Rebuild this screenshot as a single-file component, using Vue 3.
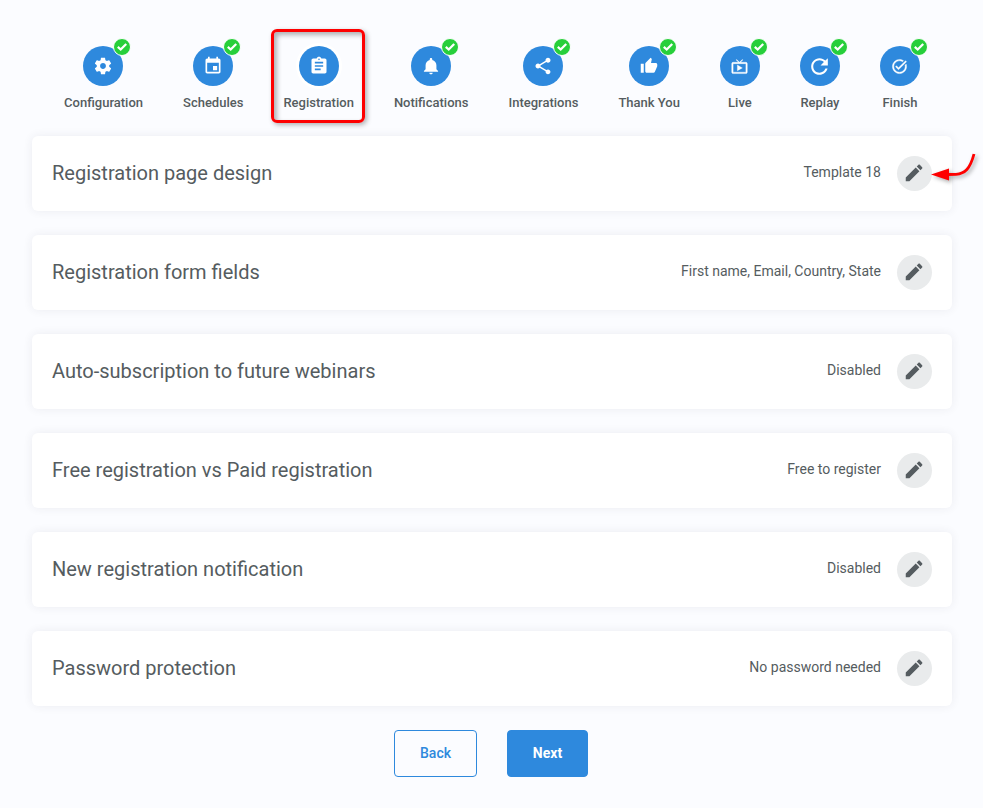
<script setup>
import { ref } from 'vue'

const steps = ref([
  { name: 'Configuration', done: true, size: 20, icon: 'M19.43 12.98c.04-.32.07-.64.07-.98s-.03-.66-.07-.98l2.11-1.65c.19-.15.24-.42.12-.64l-2-3.46c-.12-.22-.39-.3-.61-.22l-2.49 1c-.52-.4-1.08-.73-1.69-.98l-.38-2.65C14.46 2.18 14.25 2 14 2h-4c-.25 0-.46.18-.49.42l-.38 2.65c-.61.25-1.17.59-1.69.98l-2.49-1c-.23-.09-.49 0-.61.22l-2 3.46c-.13.22-.07.49.12.64l2.11 1.65c-.04.32-.07.65-.07.98s.03.66.07.98l-2.11 1.65c-.19.15-.24.42-.12.64l2 3.46c.12.22.39.3.61.22l2.49-1c.52.4 1.08.73 1.69.98l.38 2.65c.03.24.24.42.49.42h4c.25 0 .46-.18.49-.42l.38-2.65c.61-.25 1.17-.59 1.69-.98l2.49 1c.23.09.49 0 .61-.22l2-3.46c.12-.22.07-.49-.12-.64l-2.11-1.65zM12 15.5c-1.93 0-3.5-1.57-3.5-3.5s1.57-3.5 3.5-3.5 3.5 1.57 3.5 3.5-1.57 3.5-3.5 3.5z' },
  { name: 'Schedules', done: true, size: 20, icon: 'M17 12h-5v5h5v-5zM16 1v2H8V1H6v2H5c-1.11 0-1.99.9-1.99 2L3 19c0 1.1.89 2 2 2h14c1.1 0 2-.9 2-2V5c0-1.1-.9-2-2-2h-1V1h-2zm3 18H5V8h14v11z' },
  { name: 'Registration', done: false, active: true, size: 20, icon: 'M19 3h-4.18C14.4 1.84 13.3 1 12 1c-1.3 0-2.4.84-2.82 2H5c-1.1 0-2 .9-2 2v14c0 1.1.9 2 2 2h14c1.1 0 2-.9 2-2V5c0-1.1-.9-2-2-2zm-7 0c.55 0 1 .45 1 1s-.45 1-1 1-1-.45-1-1 .45-1 1-1zm2 14H7v-2h7v2zm3-4H7v-2h10v2zm0-4H7V7h10v2z' },
  { name: 'Notifications', done: true, size: 20, icon: 'M12 22c1.1 0 2-.9 2-2h-4c0 1.1.89 2 2 2zm6.5-6v-5c0-3.07-2-5.64-5-6.32V4c0-.83-.67-1.5-1.5-1.5s-1.5.67-1.5 1.5v.68C7.5 5.36 5.5 7.92 5.5 11v5l-2 2v1h17v-1l-2-2z' },
  { name: 'Integrations', done: true, size: 20, icon: 'M18 16.08c-.76 0-1.44.3-1.96.77L8.91 12.7c.05-.23.09-.46.09-.7s-.04-.47-.09-.7l7.05-4.11c.54.5 1.25.81 2.04.81 1.66 0 3-1.34 3-3s-1.34-3-3-3-3 1.34-3 3c0 .24.04.47.09.7L8.04 9.81C7.5 9.31 6.79 9 6 9c-1.66 0-3 1.34-3 3s1.34 3 3 3c.79 0 1.5-.31 2.04-.81l7.12 4.16c-.05.21-.08.43-.08.65 0 1.61 1.31 2.92 2.92 2.92 1.61 0 2.92-1.31 2.92-2.92s-1.31-2.92-2.92-2.92z' },
  { name: 'Thank You', done: true, size: 18, icon: 'M1 21h4V9H1v12zm22-11c0-1.1-.9-2-2-2h-6.31l.95-4.57.03-.32c0-.41-.17-.79-.44-1.06L14.17 1 7.59 7.59C7.22 7.95 7 8.45 7 9v10c0 1.1.9 2 2 2h9c.83 0 1.54-.5 1.84-1.22l3.02-7.05c.09-.23.14-.47.14-.73v-2z' },
  { name: 'Live', done: true, bold: true, size: 17, icon: 'M21 6h-7.59l3.29-3.29L16 2l-4 4-4-4-.7.71L10.59 6H3c-1.1 0-2 .89-2 2v12c0 1.1.9 2 2 2h18c1.1 0 2-.9 2-2V8c0-1.11-.9-2-2-2zm0 14H3V8h18v12zM9 10v8l7-4z' },
  { name: 'Replay', done: true, size: 25, icon: 'M17.65 6.35C16.2 4.9 14.21 4 12 4c-4.42 0-7.99 3.58-7.99 8s3.57 8 7.99 8c3.73 0 6.84-2.55 7.73-6h-2.08c-.82 2.33-3.04 4-5.65 4-3.31 0-6-2.69-6-6s2.69-6 6-6c1.66 0 3.14.69 4.22 1.78L13 11h7V4l-2.35 2.35z' },
  { name: 'Finish', done: true, bold: true, size: 17, icon: 'M22 5.18 10.59 16.6l-4.24-4.24 1.41-1.41 2.83 2.83 10-10L22 5.18zm-2.21 5.04c.13.57.21 1.17.21 1.78 0 4.42-3.58 8-8 8s-8-3.58-8-8 3.58-8 8-8c1.58 0 3.04.46 4.28 1.25l1.44-1.44C16.1 2.67 14.13 2 12 2 6.48 2 2 6.48 2 12s4.48 10 10 10 10-4.48 10-10c0-1.19-.22-2.33-.6-3.39l-1.61 1.61z' }
])

const settings = ref([
  { title: 'Registration page design', value: 'Template 18' },
  { title: 'Registration form fields', value: 'First name, Email, Country, State' },
  { title: 'Auto-subscription to future webinars', value: 'Disabled' },
  { title: 'Free registration vs Paid registration', value: 'Free to register' },
  { title: 'New registration notification', value: 'Disabled' },
  { title: 'Password protection', value: 'No password needed' }
])
</script>

<template>
  <div class="page">
    <nav class="steps">
      <div v-for="step in steps" :key="step.name" class="step" :class="{ active: step.active }">
        <div class="circle">
          <svg :class="{ bold: step.bold }" :width="step.size" :height="step.size" viewBox="0 0 24 24"><path :d="step.icon" /></svg>
          <span v-if="step.done" class="badge">
            <svg width="16" height="16" viewBox="0 0 16 16"><path d="M3.8 7.9 6.7 10.5 12.2 5" /></svg>
          </span>
        </div>
        <span class="label">{{ step.name }}</span>
      </div>
    </nav>

    <div class="cards">
      <div v-for="(item, index) in settings" :key="index" class="card">
        <h2>{{ item.title }}</h2>
        <span class="value">{{ item.value }}</span>
        <button class="edit">
          <svg width="22" height="22" viewBox="0 0 24 24"><path d="M3 17v4h4L17.9 10.1l-4-4L3 17zM20.9 7.1c.4-.4.4-1 0-1.4l-2.6-2.6c-.4-.4-1-.4-1.4 0l-1.9 1.9 4 4 1.9-1.9z" /></svg>
        </button>
        <svg v-if="index === 0" class="arrow" width="52" height="36" viewBox="0 0 52 36">
          <path class="tail" d="M43 4C39 19 34 23.5 25 24.3L17 24.5" />
          <path class="head" d="M0 24.5 18 18.6V30.6z" />
        </svg>
      </div>
    </div>

    <div class="actions">
      <button class="btn back">Back</button>
      <button class="btn next">Next</button>
    </div>
  </div>
</template>

<style>
body {
  background-color: #fbfcff;
}
</style>

<style scoped>
* {
  box-sizing: border-box;
}
.page {
  font-family: Roboto, sans-serif;
  color: #555c60;
  width: 983px;
  height: 808px;
  padding: 46px 31px 0 32px;
  background-color: #fbfcff;
  overflow: hidden;
}
.steps {
  display: flex;
  justify-content: center;
  gap: 40px;
  height: 90px;
}
.step {
  position: relative;
  display: flex;
  flex-direction: column;
  align-items: center;
  flex-shrink: 0;
  min-width: 40px;
}
.step:first-child .circle {
  margin-right: 1px;
}
.step.active::before {
  content: '';
  position: absolute;
  box-sizing: border-box;
  top: -17px;
  left: 50%;
  width: 94px;
  height: 94px;
  margin-left: -47.5px;
  border: 3px solid #fe0000;
  border-radius: 6px;
  box-shadow: 2px 2px 5px rgba(0, 0, 0, 0.3), inset 3px 3px 5px rgba(0, 0, 0, 0.3);
}
.circle {
  position: relative;
  display: flex;
  align-items: center;
  justify-content: center;
  width: 40px;
  height: 40px;
  border-radius: 50%;
  background-color: #2e89dd;
}
.active .circle {
  box-shadow: 0 0 0 3px #fff;
}
.circle svg {
  display: block;
  fill: #fff;
}
.circle .bold {
  stroke: #fff;
  stroke-width: 0.5;
}
.badge {
  position: absolute;
  top: -8px;
  right: -8px;
  width: 18px;
  height: 18px;
  border: 1px solid #fff;
  border-radius: 50%;
  background-color: #27cf3b;
}
.badge svg path {
  fill: none;
  stroke: #fff;
  stroke-width: 2.3;
}
.label {
  margin-top: 9px;
  font-size: 13px;
  font-weight: 500;
  line-height: 15px;
  white-space: nowrap;
}
.cards {
  display: flex;
  flex-direction: column;
  gap: 24px;
}
.card {
  position: relative;
  display: flex;
  align-items: center;
  height: 75px;
  padding: 0 20px;
  border-radius: 6px;
  background-color: #fff;
  box-shadow: 0 0 10px rgba(50, 55, 80, 0.08);
}
h2 {
  flex: 1;
  margin: 0 0 2px;
  font-size: 20px;
  font-weight: 400;
  line-height: 24px;
}
.value {
  margin: -3px 16px 0 0;
  font-size: 14px;
  line-height: 18px;
}
.edit {
  display: flex;
  align-items: center;
  justify-content: center;
  width: 35px;
  height: 35px;
  padding: 0 1px 1px 0;
  border: none;
  border-radius: 50%;
  background-color: #e9ebec;
  cursor: pointer;
}
.edit svg {
  fill: #555c60;
}
.arrow {
  position: absolute;
  top: 14px;
  right: -31px;
  filter: drop-shadow(2px 2px 2px rgba(0, 0, 0, 0.35));
}
.tail {
  fill: none;
  stroke: #fe0000;
  stroke-width: 2.8;
}
.head {
  fill: #fe0000;
}
.actions {
  display: flex;
  justify-content: center;
  gap: 30px;
  margin-top: 24px;
  padding-right: 2px;
}
.btn {
  height: 47px;
  padding: 0 0 2px;
  border: 1px solid #2e89dd;
  border-radius: 4px;
  font-family: inherit;
  font-size: 14px;
  cursor: pointer;
}
.back {
  width: 83px;
  background-color: transparent;
  color: #2e89dd;
  font-weight: 500;
}
.next {
  width: 81px;
  background-color: #2e89dd;
  color: #fff;
  font-weight: 700;
}
</style>
